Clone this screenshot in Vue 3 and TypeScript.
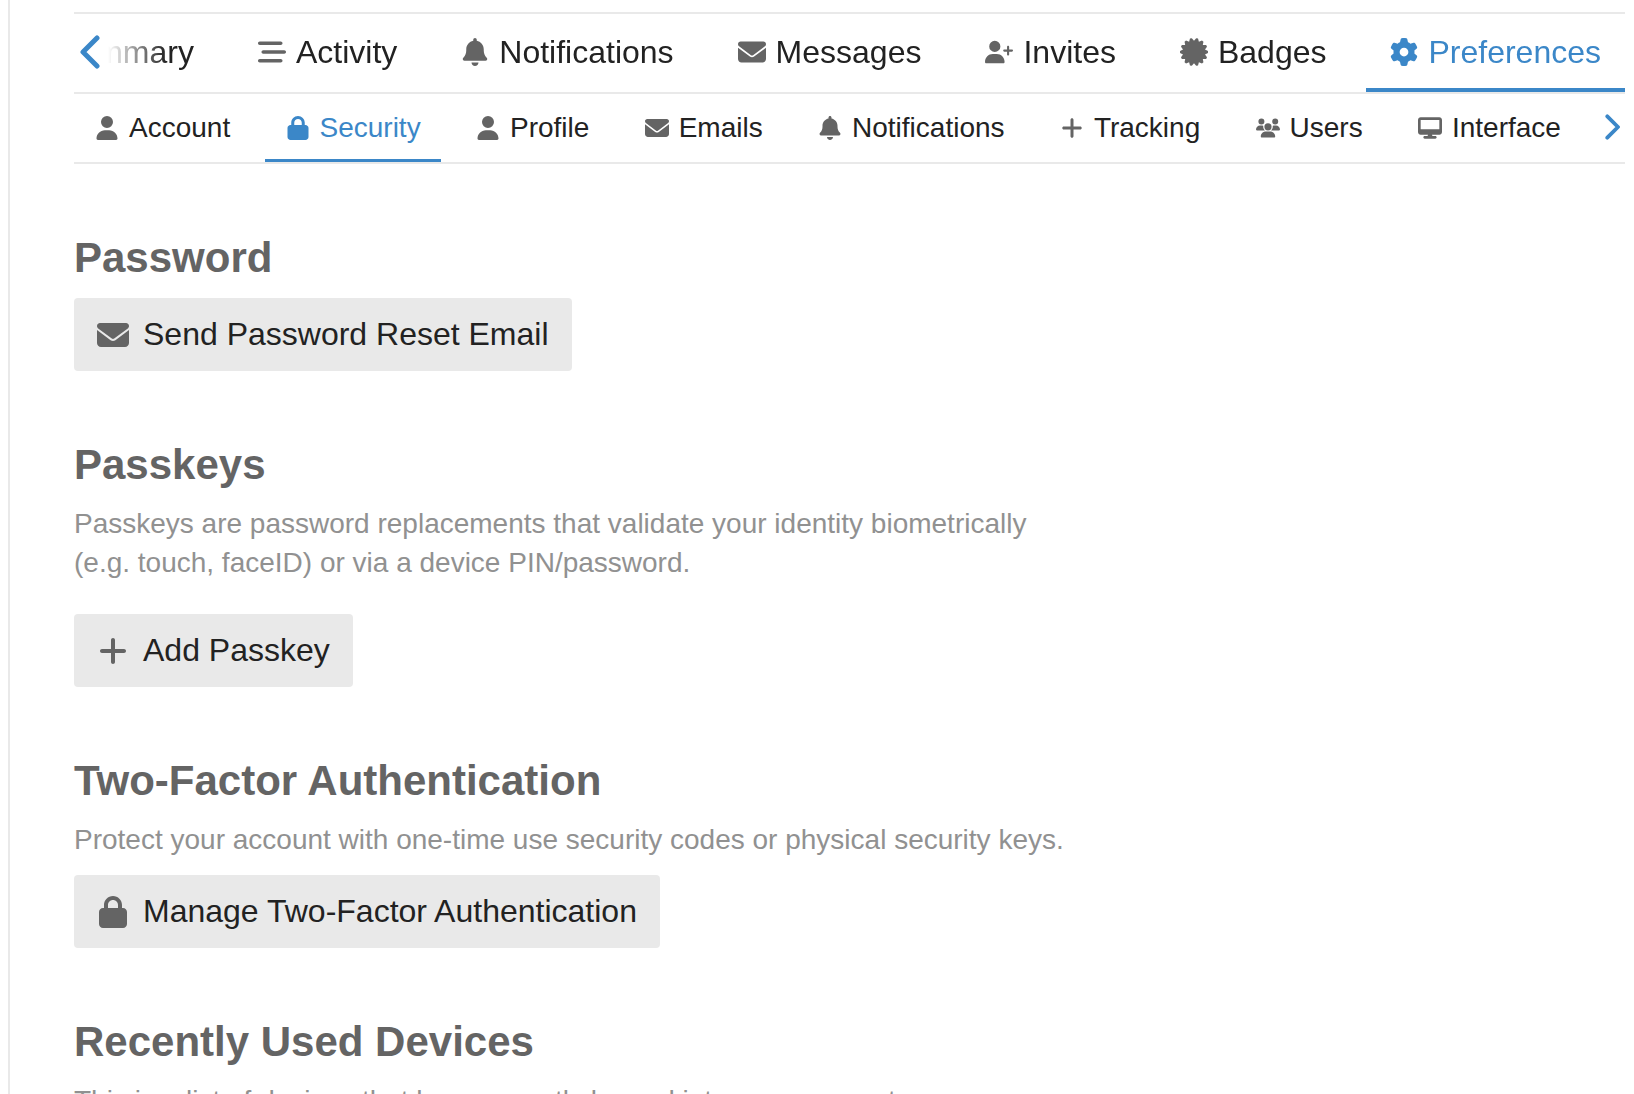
<script setup lang="ts">
interface Tab {
  label: string
  icon: string
  active?: boolean
}

interface Glyph {
  box: string
  d: string
}

// A seal with blunt teeth, the first one pointing right.
function seal(teeth: number, outer: number, inner: number): string {
  const step = (Math.PI * 2) / teeth
  const points: string[] = []
  const add = (angle: number, radius: number) => {
    const x = 256 + Math.cos(angle) * radius
    const y = 256 + Math.sin(angle) * radius
    points.push(`${x.toFixed(1)} ${y.toFixed(1)}`)
  }
  for (let i = 0; i < teeth; i++) {
    const angle = i * step
    add(angle - step * 0.15, outer)
    add(angle + step * 0.15, outer)
    add(angle + step * 0.5, inner)
  }
  return `M${points.join('L')}z`
}

const glyphs: Record<string, Glyph> = {
  user: {
    box: '0 0 448 512',
    d: 'M224 256A128 128 0 1 0 224 0a128 128 0 1 0 0 256zm-45.7 48C79.8 304 0 383.8 0 482.3C0 498.7 13.3 512 29.7 512l388.6 0c16.4 0 29.7-13.3 29.7-29.7C448 383.8 368.2 304 269.7 304l-91.4 0z',
  },
  stream: {
    box: '0 0 512 512',
    d: 'M0 96C0 78.3 14.3 64 32 64l384 0c17.7 0 32 14.3 32 32s-14.3 32-32 32L32 128C14.3 128 0 113.7 0 96zM64 256c0-17.7 14.3-32 32-32l384 0c17.7 0 32 14.3 32 32s-14.3 32-32 32L96 288c-17.7 0-32-14.3-32-32zM448 416c0 17.7-14.3 32-32 32L32 448c-17.7 0-32-14.3-32-32s14.3-32 32-32l384 0c17.7 0 32 14.3 32 32z',
  },
  bell: {
    box: '0 0 448 512',
    d: 'M224 0c-17.7 0-32 14.3-32 32l0 19.2C119 66 64 130.6 64 208l0 18.8c0 47-17.3 92.4-48.5 127.6l-7.4 8.3c-8.4 9.4-10.4 22.9-5.3 34.4S19.4 416 32 416l384 0c12.6 0 24-7.4 29.2-18.9s3.1-25-5.3-34.4l-7.4-8.3C401.3 319.2 384 273.9 384 226.8l0-18.8c0-77.4-55-142-128-156.8L256 32c0-17.7-14.3-32-32-32zm45.3 493.3c12-12 18.7-28.3 18.7-45.3l-64 0-64 0c0 17 6.7 33.3 18.7 45.3s28.3 18.7 45.3 18.7s33.3-6.7 45.3-18.7z',
  },
  envelope: {
    box: '0 0 512 512',
    d: 'M48 64C21.5 64 0 85.5 0 112c0 15.1 7.1 29.3 19.2 38.4L236.8 313.6c11.4 8.5 27 8.5 38.4 0L492.8 150.4c12.1-9.1 19.2-23.3 19.2-38.4c0-26.5-21.5-48-48-48L48 64zM0 176L0 384c0 35.3 28.7 64 64 64l384 0c35.3 0 64-28.7 64-64l0-208L294.4 339.2c-22.8 17.1-54 17.1-76.8 0L0 176z',
  },
  userPlus: {
    box: '0 0 640 512',
    d: 'M96 128a128 128 0 1 1 256 0A128 128 0 1 1 96 128zM0 482.3C0 383.8 79.8 304 178.3 304l91.4 0C368.2 304 448 383.8 448 482.3c0 16.4-13.3 29.7-29.7 29.7L29.7 512C13.3 512 0 498.7 0 482.3zM504 312l0-64-64 0c-13.3 0-24-10.7-24-24s10.7-24 24-24l64 0 0-64c0-13.3 10.7-24 24-24s24 10.7 24 24l0 64 64 0c13.3 0 24 10.7 24 24s-10.7 24-24 24l-64 0 0 64c0 13.3-10.7 24-24 24s-24-10.7-24-24z',
  },
  certificate: {
    box: '0 0 512 512',
    d: seal(14, 256, 206),
  },
  gear: {
    box: '0 0 512 512',
    d: 'M495.9 166.6c3.2 8.7 .5 18.4-6.4 24.6l-43.3 39.4c1.1 8.3 1.7 16.8 1.7 25.4s-.6 17.1-1.7 25.4l43.3 39.4c6.9 6.2 9.6 15.9 6.4 24.6c-4.4 11.9-9.7 23.3-15.8 34.3l-4.7 8.1c-6.6 11-14 21.4-22.1 31.2c-5.9 7.2-15.7 9.6-24.5 6.8l-55.7-17.7c-13.4 10.3-28.2 18.9-44 25.4l-12.5 57.1c-2 9.1-9 16.3-18.2 17.8c-13.8 2.3-28 3.5-42.5 3.5s-28.7-1.2-42.5-3.5c-9.2-1.5-16.2-8.7-18.2-17.8l-12.5-57.1c-15.8-6.5-30.6-15.1-44-25.4L83.1 425.9c-8.8 2.8-18.6 .3-24.5-6.8c-8.1-9.8-15.5-20.2-22.1-31.2l-4.7-8.1c-6.1-11-11.4-22.4-15.8-34.3c-3.2-8.7-.5-18.4 6.4-24.6l43.3-39.4C64.6 273.1 64 264.6 64 256s.6-17.1 1.7-25.4L22.4 191.2c-6.9-6.2-9.6-15.9-6.4-24.6c4.4-11.9 9.7-23.3 15.8-34.3l4.7-8.1c6.6-11 14-21.4 22.1-31.2c5.9-7.2 15.7-9.6 24.5-6.8l55.7 17.7c13.4-10.3 28.2-18.9 44-25.4l12.5-57.1c2-9.1 9-16.3 18.2-17.8C227.3 1.2 241.5 0 256 0s28.7 1.2 42.5 3.5c9.2 1.5 16.2 8.7 18.2 17.8l12.5 57.1c15.8 6.5 30.6 15.1 44 25.4l55.7-17.7c8.8-2.8 18.6-.3 24.5 6.8c8.1 9.8 15.5 20.2 22.1 31.2l4.7 8.1c6.1 11 11.4 22.4 15.8 34.3zM256 336a80 80 0 1 0 0-160 80 80 0 1 0 0 160z',
  },
  lock: {
    box: '0 0 448 512',
    d: 'M144 144l0 48 160 0 0-48c0-44.2-35.8-80-80-80s-80 35.8-80 80zM80 192l0-48C80 64.5 144.5 0 224 0s144 64.5 144 144l0 48 16 0c35.3 0 64 28.7 64 64l0 192c0 35.3-28.7 64-64 64L64 512c-35.3 0-64-28.7-64-64L0 256c0-35.3 28.7-64 64-64l16 0z',
  },
  plus: {
    box: '0 0 448 512',
    d: 'M256 80c0-17.7-14.3-32-32-32s-32 14.3-32 32l0 144L48 224c-17.7 0-32 14.3-32 32s14.3 32 32 32l144 0 0 144c0 17.7 14.3 32 32 32s32-14.3 32-32l0-144 144 0c17.7 0 32-14.3 32-32s-14.3-32-32-32l-144 0 0-144z',
  },
  users: {
    box: '0 0 640 512',
    d: 'M144 0a80 80 0 1 1 0 160A80 80 0 1 1 144 0zM512 0a80 80 0 1 1 0 160A80 80 0 1 1 512 0zM0 298.7C0 239.8 47.8 192 106.7 192l42.7 0c15.9 0 31 3.5 44.6 9.7c-1.3 7.2-1.9 14.7-1.9 22.3c0 38.2 16.8 72.5 43.3 96c-.2 0-.4 0-.7 0L21.3 320C9.6 320 0 310.4 0 298.7zM405.3 320c-.2 0-.4 0-.7 0c26.6-23.5 43.3-57.8 43.3-96c0-7.6-.7-15-1.9-22.3c13.6-6.3 28.7-9.7 44.6-9.7l42.7 0C592.2 192 640 239.8 640 298.7c0 11.8-9.6 21.3-21.3 21.3l-213.3 0zM224 224a96 96 0 1 1 192 0 96 96 0 1 1 -192 0zM128 485.3C128 411.7 187.7 352 261.3 352l117.3 0C452.3 352 512 411.7 512 485.3c0 14.7-11.9 26.7-26.7 26.7l-330.7 0c-14.7 0-26.7-11.9-26.7-26.7z',
  },
  desktop: {
    box: '0 0 576 512',
    d: 'M64 0C28.7 0 0 28.7 0 64L0 352c0 35.3 28.7 64 64 64l176 0-10.7 32L160 448c-17.7 0-32 14.3-32 32s14.3 32 32 32l256 0c17.7 0 32-14.3 32-32s-14.3-32-32-32l-69.3 0L336 416l176 0c35.3 0 64-28.7 64-64l0-288c0-35.3-28.7-64-64-64L64 0zM512 64l0 224L64 288 64 64l448 0z',
  },
}

const primary: Tab[] = [
  { label: 'Summary', icon: 'user' },
  { label: 'Activity', icon: 'stream' },
  { label: 'Notifications', icon: 'bell' },
  { label: 'Messages', icon: 'envelope' },
  { label: 'Invites', icon: 'userPlus' },
  { label: 'Badges', icon: 'certificate' },
  { label: 'Preferences', icon: 'gear', active: true },
]

const secondary: Tab[] = [
  { label: 'Account', icon: 'user' },
  { label: 'Security', icon: 'lock', active: true },
  { label: 'Profile', icon: 'user' },
  { label: 'Emails', icon: 'envelope' },
  { label: 'Notifications', icon: 'bell' },
  { label: 'Tracking', icon: 'plus' },
  { label: 'Users', icon: 'users' },
  { label: 'Interface', icon: 'desktop' },
]
</script>

<template>
  <div class="page">
    <main class="content">
      <nav class="bar primary" aria-label="User">
        <button class="scroll back" type="button" aria-label="Scroll back">
          <svg viewBox="0 0 20 34"><path d="M17 3 3 17l14 14" /></svg>
        </button>
        <ul class="tabs">
          <li v-for="tab in primary" :key="tab.label">
            <a href="#" :class="{ active: tab.active }">
              <svg class="icon" :viewBox="glyphs[tab.icon].box"><path :d="glyphs[tab.icon].d" /></svg>
              <span>{{ tab.label }}</span>
            </a>
          </li>
        </ul>
      </nav>
      <nav class="bar secondary" aria-label="Preferences">
        <ul class="tabs">
          <li v-for="tab in secondary" :key="tab.label">
            <a href="#" :class="{ active: tab.active }">
              <svg class="icon" :viewBox="glyphs[tab.icon].box"><path :d="glyphs[tab.icon].d" /></svg>
              <span>{{ tab.label }}</span>
            </a>
          </li>
        </ul>
        <button class="scroll forward" type="button" aria-label="Scroll forward">
          <svg viewBox="0 0 20 34"><path d="M3 3l14 14L3 31" /></svg>
        </button>
      </nav>

      <section class="group">
        <h2>Password</h2>
        <button class="btn" type="button">
          <svg class="icon" :viewBox="glyphs.envelope.box"><path :d="glyphs.envelope.d" /></svg>
          <span>Send Password Reset Email</span>
        </button>
      </section>

      <section class="group">
        <h2>Passkeys</h2>
        <p class="spaced">
          Passkeys are password replacements that validate your identity biometrically (e.g. touch,
          faceID) or via a device PIN/password.
        </p>
        <button class="btn" type="button">
          <svg class="icon" :viewBox="glyphs.plus.box"><path :d="glyphs.plus.d" /></svg>
          <span>Add Passkey</span>
        </button>
      </section>

      <section class="group">
        <h2>Two-Factor Authentication</h2>
        <p>Protect your account with one-time use security codes or physical security keys.</p>
        <button class="btn" type="button">
          <svg class="icon" :viewBox="glyphs.lock.box"><path :d="glyphs.lock.d" /></svg>
          <span>Manage Two-Factor Authentication</span>
        </button>
      </section>

      <section class="group">
        <h2>Recently Used Devices</h2>
        <p>This is a list of devices that have recently logged into your account.</p>
      </section>
    </main>
  </div>
</template>

<style>
body {
  background: #fff;
}
</style>

<style scoped>
.page {
  height: 100vh;
  overflow: hidden;
  box-sizing: border-box;
  margin-left: 8px;
  padding: 12px 9px 0 64px;
  border-left: 2px solid #e9e9e9;
  font-family: "Liberation Sans", Arial, sans-serif;
  font-size: 32px;
  color: #222;
}

.bar {
  position: relative;
  border-bottom: 2px solid #e9e9e9;
}

.primary {
  border-top: 2px solid #e9e9e9;
}

.tabs {
  display: flex;
  margin: 0;
  padding: 0;
  list-style: none;
  overflow: hidden;
}

.tabs li {
  flex: none;
}

.tabs a {
  display: flex;
  align-items: center;
  gap: 10px;
  box-sizing: border-box;
  color: #222;
  text-decoration: none;
  white-space: nowrap;
}

.primary .tabs {
  justify-content: flex-end;
  gap: 16px;
  mask-image: linear-gradient(to right, transparent 34px, #000 92px);
}

.primary a {
  height: 78px;
  padding: 2px 24px 0;
  border-bottom: 4px solid transparent;
}

.secondary .tabs {
  justify-content: space-between;
  padding-right: 44px;
}

.secondary a {
  height: 68px;
  padding: 2px 20px 0 21px;
  border-bottom: 3px solid transparent;
  font-size: 28px;
}

.icon {
  flex: none;
  fill: #646464;
}

.primary .icon {
  width: 28px;
  height: 28px;
}

.secondary .icon {
  width: 24px;
  height: 24px;
}

.tabs a.active {
  border-bottom-color: #3b87c8;
  color: #3b87c8;
}

.tabs .active .icon {
  fill: #3b87c8;
}

.scroll {
  position: absolute;
  z-index: 1;
  top: 0;
  bottom: 2px;
  display: flex;
  align-items: center;
  padding: 0;
  border: 0;
  background: none;
}

.back {
  left: 6px;
}

.forward {
  right: 5px;
}

.scroll svg {
  height: 34px;
  fill: none;
  stroke: #3b87c8;
  stroke-width: 5;
  stroke-linecap: round;
  stroke-linejoin: round;
}

.forward svg {
  height: 26px;
}

.group {
  margin-top: 69px;
}

h2 {
  margin: 0;
  font-size: 42px;
  line-height: 50px;
  color: #646464;
}

p {
  max-width: 1000px;
  margin: 14px 0 16px;
  font-size: 28px;
  line-height: 39px;
  color: #919191;
}

p.spaced {
  margin-bottom: 32px;
}

.btn {
  display: flex;
  align-items: center;
  gap: 14px;
  height: 73px;
  padding: 0 23px;
  border: 0;
  border-radius: 4px;
  background: #e9e9e9;
  font-family: inherit;
  font-size: 32px;
  color: #222;
}

h2 + .btn {
  margin-top: 15px;
}

.btn .icon {
  width: 32px;
  height: 32px;
}
</style>
